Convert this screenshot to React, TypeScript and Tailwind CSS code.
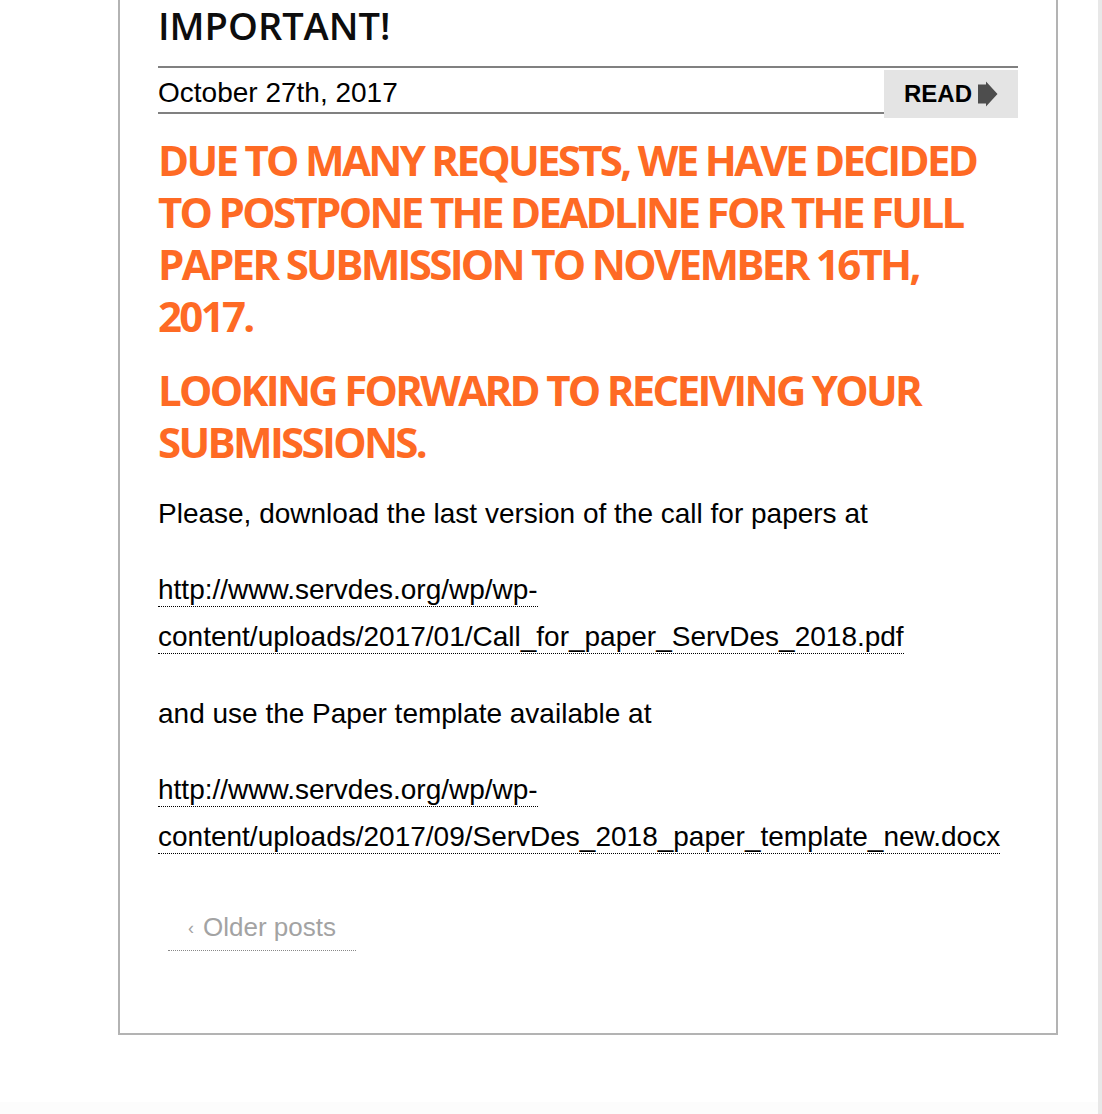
import React from "react";

const orange = "text-[#fe6a24]";

function ReadArrow() {
  return (
    <svg width="20" height="26" viewBox="0 0 20 26" className="block">
      <polygon points="0,3.5 8,3.5 8,0.5 19.5,13 8,25.5 8,22.5 0,22.5" fill="#4d4d4d" />
    </svg>
  );
}

function DottedLink({ children }: { children: React.ReactNode }) {
  return (
    <a href="#" className="text-black border-b border-dotted border-black pb-[1px] no-underline">
      {children}
    </a>
  );
}

export default function App() {
  return (
    <div className="w-[1102px] h-[1114px] bg-white flex overflow-hidden">
      <div className="flex-1 flex flex-col">
        <div
          className="ml-[118px] w-[940px] border-2 border-t-0 border-[#b3b3b3] px-[38px] pb-[82px] text-black"
          style={{ fontFamily: '"Liberation Sans", Arial, sans-serif' }}
        >
          <h1
            className="pt-[2px] text-[38px] leading-[46px] font-semibold text-[#0d0d0d]"
            style={{ fontFamily: '"Open Sans", sans-serif' }}
          >
            IMPORTANT!
          </h1>

          <div className="mt-[18px] border-t-2 border-[#808080] flex items-start">
            <div className="flex-1 h-[46px] border-b-2 border-[#808080] text-[28px] leading-[36px] pt-[7px]">
              October 27th, 2017
            </div>
            <a
              href="#"
              className="mt-[2px] h-[48px] w-[134px] bg-[#e4e4e4] flex items-center pl-[20px] text-[24px] font-bold text-black"
            >
              <span>READ</span>
              <span className="ml-[6px]">
                <ReadArrow />
              </span>
            </a>
          </div>

          <div style={{ fontFamily: '"Open Sans", sans-serif' }}>
            <h2 className={`mt-[16px] text-[42px] leading-[52px] font-bold tracking-[-2.7px] ${orange}`}>
              DUE TO MANY REQUESTS, WE HAVE DECIDED TO POSTPONE THE DEADLINE FOR THE FULL PAPER SUBMISSION TO NOVEMBER 16TH, 2017.
            </h2>
            <h2 className={`mt-[22px] text-[42px] leading-[52px] font-bold tracking-[-2.7px] ${orange}`}>
              LOOKING FORWARD TO RECEIVING YOUR SUBMISSIONS.
            </h2>
          </div>

          <div className="text-[28px] leading-[47px]">
            <p className="mt-[22px]">Please, download the last version of the call for papers at</p>
            <p className="mt-[29px]">
              <DottedLink>http://www.servdes.org/wp/wp-content/uploads/2017/01/Call_for_paper_ServDes_2018.pdf</DottedLink>
            </p>
            <p className="mt-[30px]">and use the Paper template available at</p>
            <p className="mt-[29px]">
              <DottedLink>http://www.servdes.org/wp/wp-content/uploads/2017/09/ServDes_2018_paper_template_new.docx</DottedLink>
            </p>
            <div className="mt-[41px] flex">
              <a
                href="#"
                className="ml-[10px] px-[20px] pt-[3px] text-[26px] leading-[44px] border-b border-dotted border-[#888888] text-[#a3a3a3] flex items-center"
              >
                <span className="text-[18px] mr-[9px] mt-[2px]">‹</span>
                <span>Older posts</span>
              </a>
            </div>
          </div>
        </div>
        <div className="flex-1" />
        <div className="h-[12px] bg-[#fcfcfc]" />
      </div>
      <div className="w-[4px] bg-[#e8e8e8]" />
    </div>
  );
}
